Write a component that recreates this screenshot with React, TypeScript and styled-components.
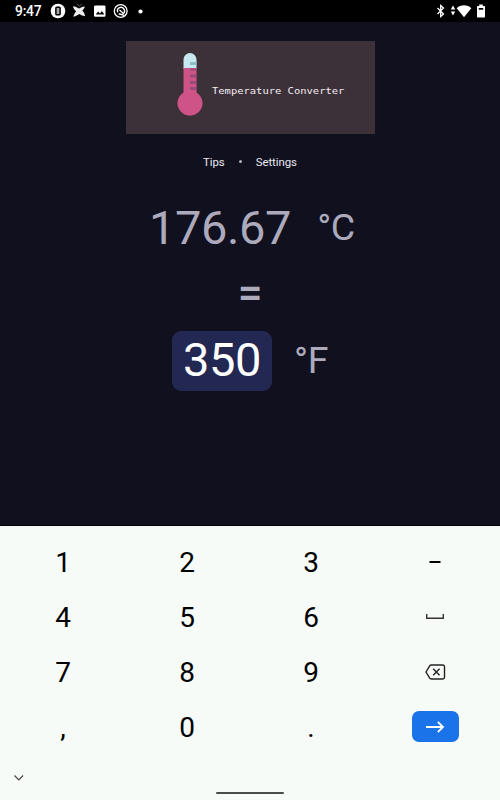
import React from "react";
import styled, { createGlobalStyle } from "styled-components";

const GlobalStyle = createGlobalStyle`
  * { box-sizing: border-box; }
  body { margin: 0; background: #11101f; }
`;

const Screen = styled.div`
  width: 500px;
  height: 800px;
  display: flex;
  flex-direction: column;
  overflow: hidden;
  background: #11101f;
  font-family: Roboto, "Liberation Sans", sans-serif;
`;

const StatusBar = styled.header`
  flex: none;
  height: 22px;
  display: flex;
  align-items: center;
  justify-content: space-between;
  padding: 0 14px 0 15px;
  background: #000;
  color: #fff;
`;

const StatusGroup = styled.div`
  display: flex;
  align-items: center;
  height: 22px;
`;

const Clock = styled.span`
  width: 35px;
  font-size: 13.8px;
  font-weight: 500;
  line-height: 22px;
  letter-spacing: -0.2px;
`;

const StatusIcon = styled.svg<{ $gap?: number }>`
  display: block;
  flex: none;
  margin-left: ${(p) => p.$gap ?? 0}px;
`;

const Main = styled.main`
  flex: none;
  height: 504px;
  display: flex;
  flex-direction: column;
  align-items: center;
  border-bottom: 1px solid #000;
`;

const Banner = styled.div`
  width: 249px;
  height: 93px;
  margin-top: 19px;
  margin-left: 1px;
  display: flex;
  background: #3d3139;
`;

const Thermometer = styled.svg`
  flex: none;
  display: block;
  margin: 11px 0 0 51px;
`;

const Title = styled.h1`
  margin: 43px 0 0 9px;
  font: 400 9px/14px "DejaVu Sans Mono", monospace;
  height: 14px;
  transform: scaleX(1.163);
  transform-origin: left;
  white-space: nowrap;
  color: #f3ecf1;
`;

const Links = styled.nav`
  display: flex;
  align-items: center;
  height: 16px;
  margin-top: 20px;
  font-size: 11.4px;
  line-height: 16px;
  letter-spacing: -0.05px;
  color: #e9e8ef;
`;

const Dot = styled.span`
  width: 3px;
  height: 3px;
  margin: 0 14px 2px 14px;
  border-radius: 50%;
  background: #b5b3c4;
`;

const Reading = styled.div<{ $top: number; $gap: number; $shift: number }>`
  display: flex;
  align-items: center;
  height: 60px;
  margin-top: ${(p) => p.$top}px;
  margin-left: ${(p) => p.$shift}px;
  gap: ${(p) => p.$gap}px;
`;

const Value = styled.span<{ $active?: boolean }>`
  display: flex;
  justify-content: center;
  height: 60px;
  width: ${(p) => (p.$active ? "100px" : "auto")};
  border-radius: 9px;
  background: ${(p) => (p.$active ? "#222852" : "transparent")};
  color: ${(p) => (p.$active ? "#fff" : "#acaabb")};
  font-size: 47px;
  line-height: ${(p) => (p.$active ? 58 : 59)}px;
  letter-spacing: -0.4px;
`;

const Unit = styled.span`
  height: 60px;
  font-size: 37.5px;
  line-height: 58px;
  letter-spacing: -0.3px;
  color: #acaabb;
`;

const Equals = styled.div`
  margin-top: 5px;
  height: 60px;
  font-size: 44px;
  font-weight: 500;
  line-height: 60px;
  color: #acaabb;
`;

const Keyboard = styled.section`
  flex: 1;
  display: flex;
  flex-direction: column;
  padding-top: 9px;
  background: #f6fbf8;
`;

const Keys = styled.div`
  display: grid;
  grid-template-columns: repeat(4, 124px);
  grid-auto-rows: 55px;
  padding-left: 1px;
`;

const Key = styled.button<{ $icon: boolean }>`
  display: flex;
  align-items: center;
  justify-content: center;
  padding: 0 0 ${(p) => (p.$icon ? 2 : 0)}px;
  border: 0;
  background: none;
  color: #000;
  font: 400 28px/55px Roboto, sans-serif;
`;

const Enter = styled.span`
  display: flex;
  align-items: center;
  justify-content: center;
  width: 47px;
  height: 31px;
  border-radius: 7px;
  background: #1a73e8;
`;

const NavBar = styled.footer`
  display: grid;
  grid-template-columns: 1fr 68px 1fr;
  align-items: start;
  padding-top: 18px;
`;

const Chevron = styled.svg`
  display: block;
  margin-left: 13px;
`;

const HomeHandle = styled.span`
  height: 2px;
  margin-top: 19px;
  border-radius: 1px;
  background: #4b4d4c;
`;

const icons: Record<string, React.ReactNode> = {
  minus: (
    <svg width="20" height="20" viewBox="0 0 20 20">
      <path d="M4.5 10h11" stroke="#000" strokeWidth="2" />
    </svg>
  ),
  space: (
    <svg width="20" height="20" viewBox="0 0 20 20" fill="none">
      <path d="M1.7 7v4.3h16.6V7" stroke="#333" strokeWidth="1.4" />
    </svg>
  ),
  delete: (
    <svg width="22" height="20" viewBox="0 0 22 20" fill="none" stroke="#222" strokeWidth="1.4">
      <path d="M7.2 3h11.6a1.7 1.7 0 0 1 1.7 1.7v10.6a1.7 1.7 0 0 1-1.7 1.7H7.2a1.8 1.8 0 0 1-1.5-.8L2 10l3.7-6.2A1.8 1.8 0 0 1 7.2 3z" />
      <path d="m9.2 6.8 6.4 6.4m0-6.4-6.4 6.4" />
    </svg>
  ),
  enter: (
    <Enter>
      <svg width="20" height="14" viewBox="0 0 20 14" fill="none" stroke="#fff" strokeWidth="1.8">
        <path d="M1 7h17M12.8 1.8 18 7l-5.2 5.2" />
      </svg>
    </Enter>
  ),
};

const keys = ["1", "2", "3", "minus", "4", "5", "6", "space", "7", "8", "9", "delete", ",", "0", ".", "enter"];

export default function App() {
  return (
    <Screen>
      <GlobalStyle />
      <StatusBar>
        <StatusGroup>
          <Clock>9:47</Clock>
          <StatusIcon width="16" height="16" viewBox="0 0 16 16">
            <circle cx="8" cy="8" r="7.3" fill="#fff" />
            <rect x="5.9" y="4.3" width="4.2" height="7.4" rx=".8" fill="#aaa" stroke="#000" strokeWidth="1.5" />
          </StatusIcon>
          <StatusIcon $gap={6} width="14" height="16" viewBox="0 0 14 16">
            <path d="M1 3.2c2.3.2 4 1 6 2.4 1.5-1.2 3.1-2 6-2.2-.6 1.6-1.5 2.9-2.7 4.2 1.5 1.6 2.3 3.2 2.9 5.600-2.500-.4-4.300-1-5.800-2.200-1.500 1.100-3.500 2.100-6.100 2.700.6-2.200 1.600-3.900 2.800-5.500C2.700 6.900 1.500 5.700 1 3.200z" fill="#eee" />
            <path d="m5 .8 2.2 2.6L9.8.8" fill="none" stroke="#777" strokeWidth=".8" />
          </StatusIcon>
          <StatusIcon $gap={7} width="14" height="14" viewBox="0 0 14 14">
            <rect x="1" y="1.5" width="11.5" height="11.2" rx="1.3" fill="#fff" />
            <path d="m2.7 10.5 2.5-3 1.7 2 2-2.6 2.5 3.6z" fill="#000" />
          </StatusIcon>
          <StatusIcon $gap={6} width="16" height="16" viewBox="0 0 16 16" fill="none" stroke="#fff">
            <circle cx="7.7" cy="8" r="6.4" strokeWidth="1.3" />
            <path d="M4.8 9.3A3.5 3.5 0 1 1 9.6 11M5.7 10.7l5.6 1.5M6.5 7l3.6 3" strokeWidth="1.4" />
          </StatusIcon>
          <StatusIcon $gap={9} width="5" height="5" viewBox="0 0 5 5">
            <circle cx="2.5" cy="2.5" r="2.1" fill="#fff" />
          </StatusIcon>
        </StatusGroup>
        <StatusGroup>
          <StatusIcon width="10" height="14" viewBox="0 0 10 14" fill="none" stroke="#fff" strokeWidth="1.3">
            <path d="m1.5 4 6 6L4.7 12.5v-11L7.500 4l-6 6" />
          </StatusIcon>
          <StatusIcon $gap={4} width="6" height="12" viewBox="0 0 6 12" fill="#fff">
            <path d="M3 .5 5.2 4.5H.8zM3 10.5.8 6.5h4.4z" />
          </StatusIcon>
          <StatusIcon width="16" height="14" viewBox="0 0 16 14">
            <path d="M8 13.2.7 4.2C4.8.4 11.2.4 15.3 4.2z" fill="#fff" />
          </StatusIcon>
          <StatusIcon $gap={4} width="10" height="14" viewBox="0 0 10 14">
            <path d="M3.2.6h3.6v1.500h1.5q.7 0 .7.7v9.9q0 .7-.7.7H1.7q-.7 0-.7-.7V2.8q0-.7.7-.7h1.5z" fill="#fff" />
            <path d="M2.8 4h4.4v1.7H2.8z" fill="#000" />
          </StatusIcon>
        </StatusGroup>
      </StatusBar>

      <Main>
        <Banner>
          <Thermometer width="26" height="66" viewBox="0 0 26 66">
            <path d="M6.5 17V7.500a6.500 6.500 0 0 1 13 0V17z" fill="#c7e8ee" />
            <path d="M6.5 16h13v24.500a12.500 12.500 0 1 1-13 0z" fill="#ce5386" />
            <path d="M13 16.6h6.500v2H13zM13 22.600h6.500v3H13zM13 29h6.500v3H13zM13 35h6.500v3H13z" fill="#9a4a78" />
            <path d="M13 10h6.500v3H13z" fill="#8fbfc4" />
          </Thermometer>
          <Title>Temperature Converter</Title>
        </Banner>
        <Links>
          <span>Tips</span>
          <Dot />
          <span>Settings</span>
        </Links>
        <Reading $top={28} $gap={26} $shift={4}>
          <Value>176.67</Value>
          <Unit>°C</Unit>
        </Reading>
        <Equals>=</Equals>
        <Reading $top={8} $gap={22} $shift={0}>
          <Value $active>350</Value>
          <Unit>°F</Unit>
        </Reading>
      </Main>

      <Keyboard>
        <Keys>
          {keys.map((k) => (
            <Key key={k} aria-label={k} $icon={k in icons}>
              {icons[k] ?? k}
            </Key>
          ))}
        </Keys>
        <NavBar>
          <Chevron width="12" height="12" viewBox="0 0 12 12" fill="none" stroke="#444" strokeWidth="1.2">
            <path d="m1.5 2.5 4.3 4.3 4.3-4.3" />
          </Chevron>
          <HomeHandle />
        </NavBar>
      </Keyboard>
    </Screen>
  );
}
